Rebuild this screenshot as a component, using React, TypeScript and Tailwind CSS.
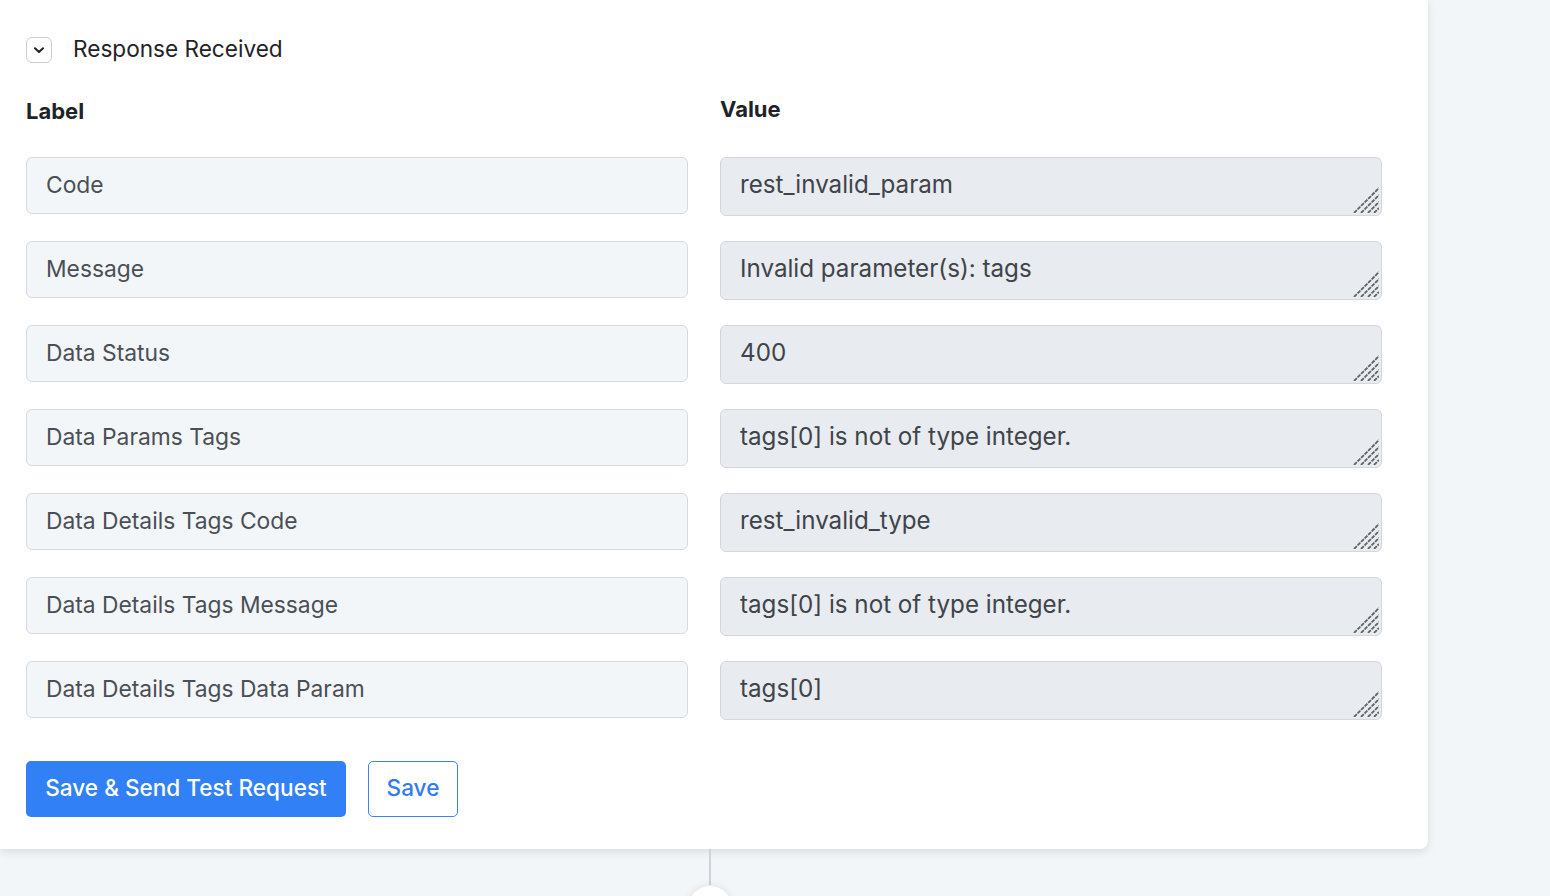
import { useState } from "react"

type Row = { label: string; value: string }

const rows: Row[] = [
  { label: "Code", value: "rest_invalid_param" },
  { label: "Message", value: "Invalid parameter(s): tags" },
  { label: "Data Status", value: "400" },
  { label: "Data Params Tags", value: "tags[0] is not of type integer." },
  { label: "Data Details Tags Code", value: "rest_invalid_type" },
  { label: "Data Details Tags Message", value: "tags[0] is not of type integer." },
  { label: "Data Details Tags Data Param", value: "tags[0]" },
]

// diagonal grip drawn in the corner of each value box
function Grip() {
  return (
    <svg
      width="26"
      height="26"
      viewBox="0 0 26 26"
      className="absolute right-[3px] bottom-[3px] pointer-events-none"
    >
      <g stroke="#5f6368" strokeWidth="1.8" strokeDasharray="4 1">
        <line x1="1" y1="26" x2="26" y2="1" />
        <line x1="8" y1="26" x2="26" y2="8" />
        <line x1="15" y1="26" x2="26" y2="15" />
        <line x1="21" y1="26" x2="26" y2="21" />
      </g>
    </svg>
  )
}

export default function App() {
  const [open, setOpen] = useState(true)

  return (
    <div className="min-h-screen w-full bg-[#f3f6f9] font-['Inter',sans-serif] overflow-hidden">
      <div className="w-[1428px] bg-white rounded-br-lg shadow-[0_3px_10px_rgba(0,0,0,0.10)] pl-[26px] pr-[46px] pt-[37px] pb-[32px]">
        <div className="flex items-center gap-[21px]">
          <button
            onClick={() => setOpen(!open)}
            className="w-[26px] h-[26px] rounded-[6px] border border-[#c9ccd1] flex items-center justify-center bg-white"
          >
            <svg width="12" height="12" viewBox="0 0 12 12" fill="none">
              <path d="M2 4.2 L6 8 L10 4.2" stroke="#1f2328" strokeWidth="2" strokeLinecap="round" strokeLinejoin="round" />
            </svg>
          </button>
          <span className="text-[22.6px] text-[#1f2328] leading-none -mt-[2px]">Response Received</span>
        </div>

        {open && (
          <>
            <div className="grid grid-cols-2 gap-x-[32px] mt-[35px]">
              <div className="text-[22px] font-bold text-[#1f2328] leading-none pt-[2px]">Label</div>
              <div className="text-[22px] font-bold text-[#1f2328] leading-none">Value</div>
            </div>

            <div className="flex flex-col gap-[25px] mt-[35px]">
              {rows.map((r) => (
                <div key={r.label} className="grid grid-cols-2 gap-x-[32px] items-start">
                  <input
                    type="text"
                    defaultValue={r.label}
                    className="h-[57px] w-full rounded-[6px] border border-[#d6d9de] bg-[#f3f6f9] px-[19px] pb-[3px] text-[22.8px] text-[#4a4f56] outline-none"
                  />
                  <div className="relative">
                    <textarea
                      rows={1}
                      defaultValue={r.value}
                      readOnly
                      className="block h-[59px] w-full resize-none rounded-[6px] border border-[#d3d6db] bg-[#e8ebef] px-[19px] pt-[9px] text-[24.2px] text-[#3f444b] outline-none"
                    />
                    <Grip />
                  </div>
                </div>
              ))}
            </div>

            <div className="flex gap-[22px] mt-[41px]">
              <button className="h-[56px] w-[320px] rounded-[5px] bg-[#3180f6] text-white text-[22.6px] font-medium pb-[2px]">
                Save &amp; Send Test Request
              </button>
              <button className="h-[56px] w-[90px] rounded-[5px] border border-[#3b82f6] bg-white text-[#2f7cf0] text-[22.6px] font-medium pb-[2px]">
                Save
              </button>
            </div>
          </>
        )}
      </div>

      <div className="pl-[709px] flex flex-col">
        <div className="w-[2px] h-[36px] bg-[#cfd2d6]" />
        <div className="w-[44px] h-[44px] -ml-[21px] mt-[1px] rounded-full bg-white shadow-[0_0_8px_rgba(0,0,0,0.10)]" />
      </div>
    </div>
  )
}
